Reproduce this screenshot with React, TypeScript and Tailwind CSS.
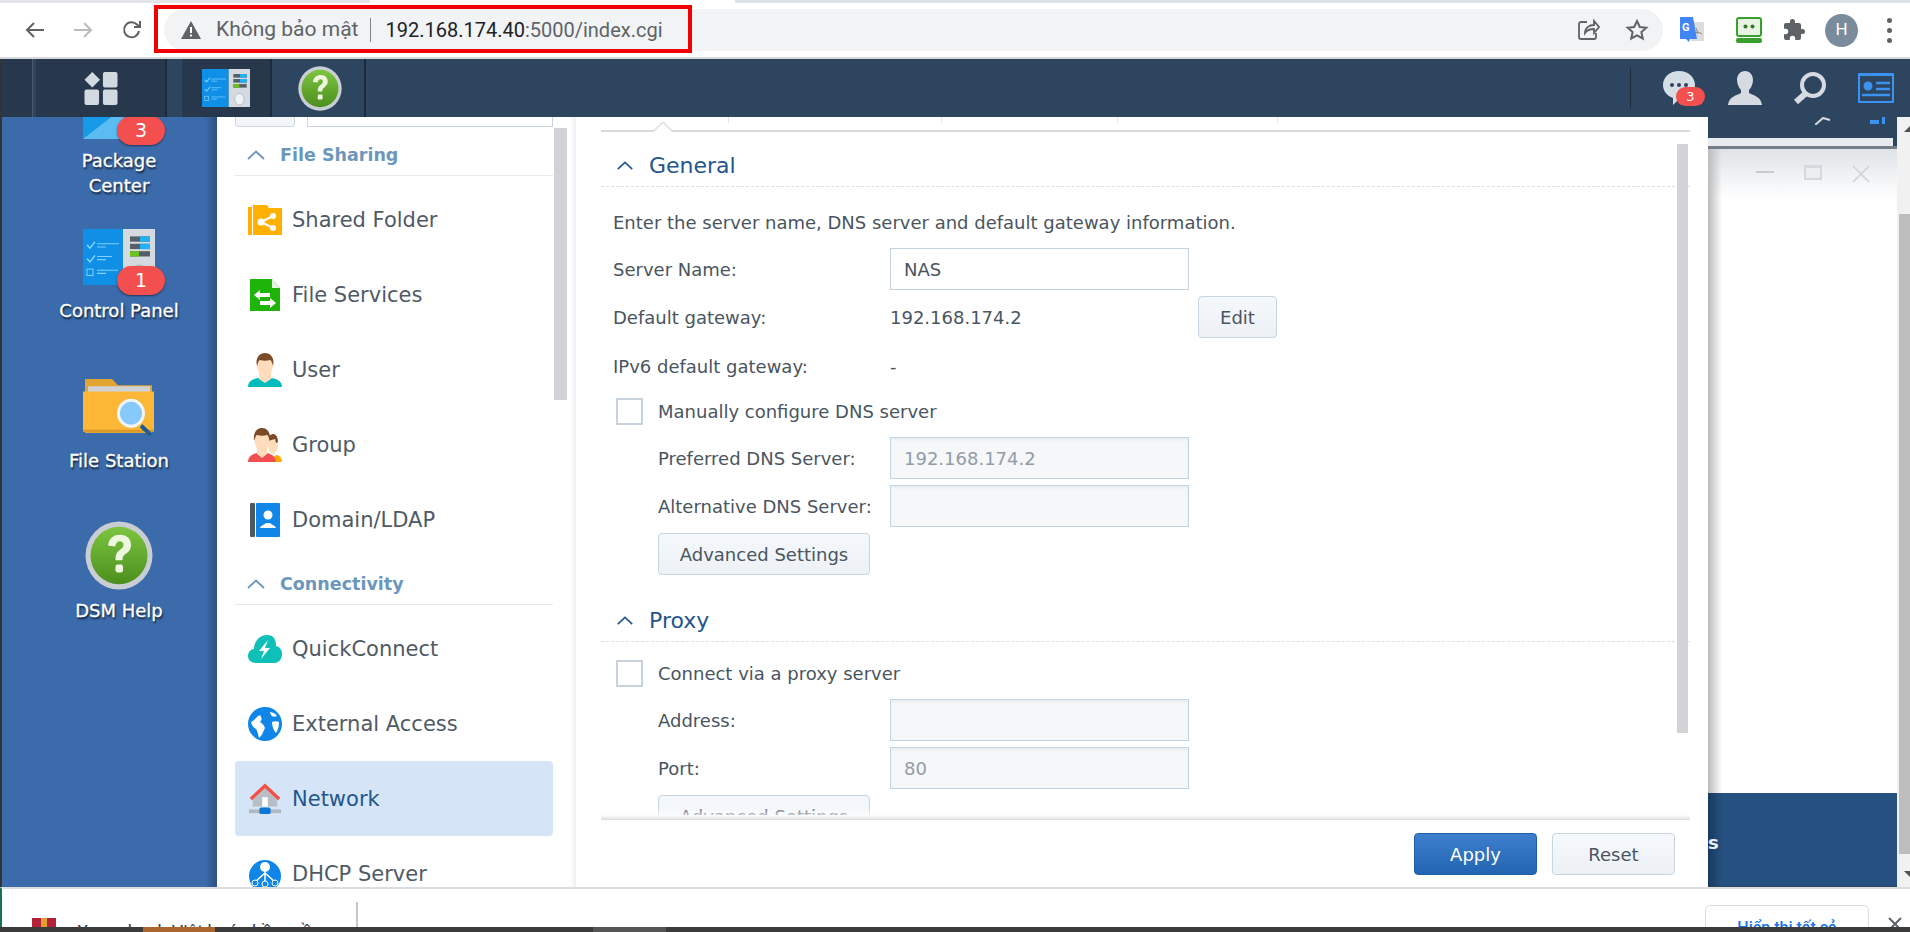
import React from "react";

const ui = "font-['DejaVu_Sans',sans-serif]";

const Chevron = ({ className }: { className: string }) => (
  <svg viewBox="0 0 18 10" className={className} fill="none" stroke="currentColor" strokeWidth="1.8">
    <path d="M1 9 9 1.5 17 9" />
  </svg>
);

const HelpIcon = ({ className }: { className: string }) => (
  <svg viewBox="0 0 68 65" preserveAspectRatio="none" className={className}>
    <defs>
      <linearGradient id="helpGreen" x1="0" y1="0" x2="0" y2="1">
        <stop offset="0" stopColor="#7cc440" />
        <stop offset="1" stopColor="#4c8f1d" />
      </linearGradient>
    </defs>
    <ellipse cx="34" cy="32.5" rx="33.5" ry="32" fill="#c9ced4" />
    <ellipse cx="34" cy="32.5" rx="28.5" ry="27" fill="url(#helpGreen)" />
    <path d="M23 23c1-7 6-10 12-10 7 0 11 4 11 9.500 0 4.500-2.500 6.500-5.500 8.500-2.500 1.700-3 3-3 6h-7c0-5 1-7.500 4.500-10 2.500-1.800 3.500-3 3.500-4.700 0-2-1.500-3.300-3.700-3.300-2.500 0-4 1.500-4.600 5z" fill="#eef7df" />
    <rect x="30.500" y="41" width="7.500" height="7.500" rx="2" fill="#eef7df" />
  </svg>
);

const ControlIcon = ({ className }: { className: string }) => (
  <svg viewBox="0 0 72 53" preserveAspectRatio="none" className={className}>
    <rect width="40" height="53" fill="#0f8fe6" />
    <rect x="40" width="32" height="53" fill="#d4dae0" />
    <path d="M4 15l3 3 5-6M4 28l3 3 5-6" stroke="#7fd0ff" strokeWidth="1.500" fill="none" />
    <rect x="4" y="38" width="6" height="6" fill="none" stroke="#7fd0ff" />
    <path d="M14 14h22M14 17h9M14 26h15M14 29h9M14 39h21M14 42h9" stroke="#7fd0ff" />
    <rect x="47" y="7" width="20" height="5" fill="#555f68" />
    <rect x="57" y="7" width="10" height="5" fill="#1fb2f5" />
    <rect x="47" y="14" width="20" height="5" fill="#555f68" />
    <rect x="57" y="14" width="10" height="5" fill="#1fb2f5" />
    <rect x="47" y="21" width="20" height="5" fill="#555f68" />
    <rect x="47" y="21" width="9" height="5" fill="#6cc31f" />
    <ellipse cx="56" cy="42" rx="7" ry="8" fill="#eef2f5" stroke="#aab4bc" />
  </svg>
);

const FolderSearchIcon = ({ className }: { className: string }) => (
  <svg viewBox="0 0 72 55" preserveAspectRatio="none" className={className}>
    <path d="M2 0h27l6 6h34v46H2z" fill="#e2a432" />
    <rect x="5" y="7" width="62" height="8" fill="#cfd3d6" />
    <path d="M0 12h71v39H0z" fill="#fbb735" />
    <path d="M0 49h71v2H0z" fill="#d9962a" />
    <path d="M58 45l10 9" stroke="#1f5d8f" strokeWidth="4" />
    <circle cx="48" cy="33" r="12.500" fill="#86c9fa" stroke="#f1f5f8" strokeWidth="3" />
  </svg>
);

const PackageIcon = ({ className }: { className: string }) => (
  <svg viewBox="0 0 72 53" preserveAspectRatio="none" className={className}>
    <path d="M0 10h72v43H0z" fill="#1699e6" />
    <path d="M0 53 34 28 72 53z" fill="#5bbcf2" />
    <path d="M16 0h40l-18 30z" fill="#f0c23c" />
  </svg>
);

const DesktopIcon = ({ icon, label, badge, badgeClass = "bottom-[-10px]", gap, className }: { icon: React.ReactNode; label: React.ReactNode; badge?: string; badgeClass?: string; gap: string; className: string }) => (
  <div className={`flex shrink-0 flex-col items-center ${className}`}>
    <div className="relative flex h-fit w-[72px] justify-center">
      {icon}
      {badge && (
        <span className={`absolute right-[-10px] flex h-[29px] w-[48px] items-center justify-center rounded-full bg-[#f44f4f] text-[19px] text-white shadow-[0_1px_2px_rgba(0,0,0,0.5)] ${badgeClass}`}>
          {badge}
        </span>
      )}
    </div>
    <div className={`${gap} whitespace-nowrap text-center text-[18px] leading-[25px] text-white [-webkit-text-stroke:0.3px_white] [text-shadow:1px_2px_2px_rgba(0,0,0,0.75)]`}>{label}</div>
  </div>
);

const SharedFolder = () => (
  <svg viewBox="0 0 34 30" className="h-[30px] w-[34px]">
    <path d="M0 2h4v28H0zM5 0h14l2 3h13v27H5z" fill="#ffb000" />
    <circle cx="13" cy="17" r="3.500" fill="#fff" />
    <circle cx="25" cy="11" r="3" fill="#fff" />
    <circle cx="25" cy="23" r="3" fill="#fff" />
    <path d="M13 17 25 11M13 17l12 6" stroke="#fff" strokeWidth="2" />
  </svg>
);

const FileServices = () => (
  <svg viewBox="0 0 34 34" className="h-[34px] w-[34px]">
    <path d="M2 1h22l8 9v23H2z" fill="#1eb40a" />
    <path d="M24 1v9h8z" fill="#e5f6e0" />
    <path d="M6 17l6-5v3h10v4H12v3zM28 25l-6 5v-3H12v-4h10v-3z" fill="#fff" />
  </svg>
);

const UserIcon = () => (
  <svg viewBox="0 0 34 34" className="h-[34px] w-[34px]">
    <path d="M0 34c0-6 5-8 10-9l7 3 7-3c5 1 10 3 10 9z" fill="#05bcbc" />
    <path d="M11 19h12v7l-6 4-6-4z" fill="#ffdcbc" />
    <ellipse cx="17" cy="12" rx="8" ry="11" fill="#ffdcbc" />
    <path d="M9 13C7 4 12 0 17 0s10 4 8 13c-1-4-2-6-3-6-3 1-7 1-10 0-1 0-2 2-3 6z" fill="#7b4a26" />
  </svg>
);

const GroupIcon = () => (
  <svg viewBox="0 0 34 34" className="h-[34px] w-[34px]">
    <path d="M24 34c0-4 3-7 5-7s5 3 5 7z" fill="#ffa800" />
    <ellipse cx="25" cy="17" rx="5" ry="9" fill="#ffdcbc" />
    <path d="M20 13c0-5 3-7 5-7s5 2 5 8l-2 1-1-4z" fill="#7b4a26" />
    <path d="M0 34c0-5 4-8 9-9l5 2 5-2c5 1 9 4 9 9z" fill="#f25050" />
    <path d="M9 19h10v7l-5 4-5-4z" fill="#ffdcbc" />
    <ellipse cx="14" cy="12" rx="7.500" ry="11" fill="#ffdcbc" />
    <path d="M6 13C5 4 9 0 14 0s9 4 8 13c-1-3-2-6-3-6-3 1-7 1-10 0-1 0-2 3-3 6z" fill="#7b4a26" />
  </svg>
);

const DomainIcon = () => (
  <svg viewBox="0 0 34 34" className="h-[34px] w-[34px]">
    <rect x="2" width="5" height="34" rx="1" fill="#4b5866" />
    <rect x="8" width="24" height="34" rx="1" fill="#0f86e8" />
    <circle cx="20" cy="12" r="4.500" fill="#fff" />
    <path d="M12 25c1-3 4-3 6-5h4c2 2 5 2 6 5z" fill="#fff" />
  </svg>
);

const QuickConnectIcon = () => (
  <svg viewBox="0 0 34 28" className="h-[28px] w-[34px]">
    <path d="M8 28C3 28 0 25 0 21s3-7 6-7c0-7 5-14 13-14s9 6 9 11c4 1 6 4 6 8 0 5-3 9-8 9z" fill="#0fc0b8" />
    <path d="M20 5l-9 11h5l-3 8 9-11h-5z" fill="#fff" />
  </svg>
);

const GlobeIcon = () => (
  <svg viewBox="0 0 34 34" className="h-[34px] w-[34px]">
    <circle cx="17" cy="17" r="17" fill="#0f86e8" />
    <path d="M3 15c3-1 5-5 9-7 2 3 2 5 0 7 2 1 4 3 5 6-2 3-2 7-6 10-1-3-1-6-3-9-2-1-4-3-5-7zM22 5c2 0 5 1 7 4-2 1-5 1-6-1zM24 15c3-1 5-1 7 0 0 5-1 8-3 11-2-2-4-7-4-11z" fill="#fff" />
  </svg>
);

const NetworkIcon = () => (
  <svg viewBox="0 0 36 34" className="h-[34px] w-[36px]">
    <path d="M18 3 31 15v10H5V15z" fill="#b8bec6" />
    <path d="M3 17 18 3l15 14" stroke="#f44f42" strokeWidth="3.500" fill="none" />
    <rect x="15" y="15" width="6" height="10" fill="#fff" />
    <rect x="1" y="28" width="34" height="4" fill="#b0b8c0" />
    <rect x="12" y="26" width="12" height="7" rx="2" fill="#0f77d8" />
  </svg>
);

const DhcpIcon = () => (
  <svg viewBox="0 0 34 30" className="h-[30px] w-[34px]">
    <circle cx="17" cy="17" r="16" fill="#0f86e8" />
    <circle cx="17" cy="8" r="5" fill="#fff" />
    <path d="M17 12v10M17 14 7 23M17 14l10 9" stroke="#fff" strokeWidth="1.500" />
    <circle cx="7" cy="24" r="3" fill="#0f86e8" stroke="#fff" />
    <circle cx="17" cy="25" r="3" fill="#0f86e8" stroke="#fff" />
    <circle cx="27" cy="24" r="3" fill="#0f86e8" stroke="#fff" />
  </svg>
);

const SectionTitle = ({ title, className }: { title: string; className: string }) => (
  <div className={`flex items-center border-b border-[#e6eaee] pl-[12px] text-[#6c97bd] ${className}`}>
    <Chevron className="h-[10px] w-[18px]" />
    <span className="ml-[15px] text-[17.5px] font-bold">{title}</span>
  </div>
);

const NavItem = ({ icon, label, active }: { icon: React.ReactNode; label: string; active?: boolean }) => (
  <div className={`flex h-[75px] w-[318px] shrink-0 items-center rounded-[4px] pl-[13px] text-[21px] ${active ? "bg-[#d5e5f7] text-[#23568c]" : "text-[#505a65]"}`}>
    <span className="flex w-[34px] justify-center">{icon}</span>
    <span className="ml-[10px] pt-[2px]">{label}</span>
  </div>
);

const Sidebar = () => (
  <div className="relative flex h-full w-[353px] shrink-0 flex-col overflow-hidden bg-white pl-[18px]">
    <div className="flex h-[10px] shrink-0">
      <div className="h-full w-[60px] rounded-b-[4px] border border-t-0 border-[#cfd8e2] bg-[#f2f6fa]" />
      <div className="ml-[12px] h-full w-[246px] border border-t-0 border-[#c9d5e1]" />
    </div>
    <SectionTitle title="File Sharing" className="h-[49px] w-[318px] shrink-0 pt-[8px]" />
    <div className="h-[6px] shrink-0" />
    <NavItem icon={<SharedFolder />} label="Shared Folder" />
    <NavItem icon={<FileServices />} label="File Services" />
    <NavItem icon={<UserIcon />} label="User" />
    <NavItem icon={<GroupIcon />} label="Group" />
    <NavItem icon={<DomainIcon />} label="Domain/LDAP" />
    <SectionTitle title="Connectivity" className="mt-[1px] h-[47px] w-[318px] shrink-0 pt-[6px]" />
    <div className="h-[6px] shrink-0" />
    <NavItem icon={<QuickConnectIcon />} label="QuickConnect" />
    <NavItem icon={<GlobeIcon />} label="External Access" />
    <NavItem icon={<NetworkIcon />} label="Network" active />
    <NavItem icon={<DhcpIcon />} label="DHCP Server" />
    <div className="absolute left-[337px] top-[11px] h-[272px] w-[13px] bg-[#d1d3d6]" />
  </div>
);

const FormLabel = ({ children, className = "w-[277px]" }: { children: React.ReactNode; className?: string }) => (
  <div className={`shrink-0 whitespace-nowrap ${className}`}>{children}</div>
);

const Field = ({ value, disabled }: { value?: string; disabled?: boolean }) => (
  <div className={`flex h-[42px] w-[299px] items-center border border-[#c5d2e0] px-[13px] ${disabled ? "bg-[#f5f7f9] text-[#929ca6] shadow-[inset_0_2px_2px_rgba(200,210,220,0.25)]" : "bg-white text-[#4a5560]"}`}>
    {value}
  </div>
);

const SoftButton = ({ label, className }: { label: string; className: string }) => (
  <div className={`flex h-[42px] items-center justify-center rounded-[4px] border border-[#c8d4e0] bg-gradient-to-b from-[#f5f9fd] to-[#edf1f5] text-[#4a5560] ${className}`}>
    {label}
  </div>
);

const SubRow = ({ label, children }: { label: string; children: React.ReactNode }) => (
  <div className="mb-[6px] flex h-[42px] items-center pl-[57px]">
    <FormLabel className="w-[232px]">{label}</FormLabel>
    {children}
  </div>
);

const Heading = ({ title, className }: { title: string; className: string }) => (
  <div className={`flex items-center border-b border-dashed border-[#d9e0e8] pl-[15px] text-[#23568c] ${className}`}>
    <Chevron className="h-[9px] w-[18px]" />
    <span className="ml-[15px] text-[22px]">{title}</span>
  </div>
);

const CheckRow = ({ label, className }: { label: string; className: string }) => (
  <div className={`flex items-center pl-[15px] ${className}`}>
    <div className="h-[27px] w-[27px] border-2 border-[#c8d2dc] bg-white" />
    <span className="ml-[15px]">{label}</span>
  </div>
);

const ContentPane = () => (
  <div className="relative flex h-full w-[1132px] shrink-0 flex-col pl-[25px] text-[18px] text-[#4a5560]">
    <div className="relative h-[15px] w-[1089px] shrink-0 border-b-2 border-[#d8dadc]">
      <div className="absolute left-[127px] top-0 h-[6px] w-px bg-[#e4e8ec]" />
      <div className="absolute left-[340px] top-0 h-[6px] w-px bg-[#e4e8ec]" />
      <div className="absolute left-[516px] top-0 h-[6px] w-px bg-[#e4e8ec]" />
      <div className="absolute left-[676px] top-0 h-[6px] w-px bg-[#e4e8ec]" />
      <svg viewBox="0 0 20 10" className="absolute left-[52px] top-[5px] h-[10px] w-[20px]">
        <path d="M0 10 10 0l10 10" fill="#fff" stroke="#dcdedf" strokeWidth="1.500" />
      </svg>
    </div>
    <div className="relative h-[688px] w-[1089px] shrink-0 overflow-hidden">
      <Heading title="General" className="mt-[11px] h-[44px] pt-[1px]" />
      <div className="mt-[24px] flex h-[22px] items-center whitespace-nowrap pl-[12px]">Enter the server name, DNS server and default gateway information.</div>
      <div className="mt-[15px] flex h-[42px] items-center pl-[12px]">
        <FormLabel>Server Name:</FormLabel>
        <Field value="NAS" />
      </div>
      <div className="mt-[6px] flex h-[42px] items-center pl-[12px]">
        <FormLabel>Default gateway:</FormLabel>
        <div className="w-[308px]">192.168.174.2</div>
        <SoftButton label="Edit" className="w-[79px]" />
      </div>
      <div className="mt-[7px] flex h-[42px] items-center pl-[12px]">
        <FormLabel>IPv6 default gateway:</FormLabel>
        <div>-</div>
      </div>
      <CheckRow label="Manually configure DNS server" className="mt-[11px] h-[27px]" />
      <div className="mt-[12px]">
        <SubRow label="Preferred DNS Server:"><Field value="192.168.174.2" disabled /></SubRow>
        <SubRow label="Alternative DNS Server:"><Field disabled /></SubRow>
        <div className="pl-[57px]">
          <SoftButton label="Advanced Settings" className="w-[212px]" />
        </div>
      </div>
      <Heading title="Proxy" className="mt-[25px] h-[42px]" />
      <CheckRow label="Connect via a proxy server" className="mt-[18px] h-[27px]" />
      <div className="mt-[12px]">
        <SubRow label="Address:"><Field disabled /></SubRow>
        <SubRow label="Port:"><Field value="80" disabled /></SubRow>
        <div className="pl-[57px]">
          <SoftButton label="Advanced Settings" className="w-[212px]" />
        </div>
      </div>
      <div className="absolute bottom-0 left-0 h-[14px] w-full bg-gradient-to-b from-white/0 to-white" />
      <div className="absolute bottom-0 left-0 h-[5px] w-full bg-gradient-to-b from-white to-[#dcdcdc]" />
      <div className="absolute left-[1076px] top-[12px] h-[589px] w-[11px] bg-[#d1d3d6]" />
    </div>
    <div className="flex h-[67px] w-[1074px] shrink-0 items-start justify-end pt-[13px]">
      <div className="flex h-[42px] w-[123px] items-center justify-center rounded-[4px] border border-[#1f5fa8] bg-gradient-to-b from-[#3d7fcd] to-[#2365b2] text-white">Apply</div>
      <SoftButton label="Reset" className="ml-[15px] w-[123px]" />
    </div>
  </div>
);

const BehindWindow = () => (
  <div className="flex h-full w-[189px] shrink-0 flex-col bg-[#2e4560]">
    <div className="relative h-[21px] shrink-0 overflow-hidden">
      <svg viewBox="0 0 16 8" className="absolute left-[107px] top-0 h-[8px] w-[16px]"><path d="M0 8 8 1l7 2" stroke="#d8dde2" strokeWidth="2" fill="none" /></svg>
      <div className="absolute left-[162px] top-[3px] h-[4px] w-[9px] bg-[#3b92f0]" />
      <div className="absolute left-[174px] top-0 h-[7px] w-[3px] bg-[#3b92f0]" />
    </div>
    <div className="h-[8px] w-[185px] shrink-0 bg-[#e8ebf0]" />
    <div className="h-[3px] shrink-0 bg-[#757d86]" />
    <div className="relative flex h-[644px] shrink-0 flex-col overflow-hidden bg-white">
      <div className="flex h-[50px] items-start bg-gradient-to-b from-[#dfe3e7] to-white pl-[48px] pt-[16px]">
        <div className="mt-[6px] h-[2px] w-[18px] bg-[#c8cacc]" />
        <div className="ml-[30px] flex h-[15px] w-[18px] flex-col bg-[#d5d8dc] p-[3px_2px_2px]"><div className="h-full w-full bg-[#eceef0]" /></div>
        <svg viewBox="0 0 18 18" className="ml-[30px] h-[18px] w-[18px]"><path d="M1 1l16 16M17 1 1 17" stroke="#cfd2d5" strokeWidth="1.500" /></svg>
      </div>
      <div className="absolute inset-y-0 left-0 w-[14px] bg-gradient-to-r from-[#bcbcbc] to-white/0" />
    </div>
    <div className="relative h-[93px] shrink-0 overflow-hidden bg-[#26507f]">
      <div className="absolute inset-y-0 left-0 w-[14px] bg-gradient-to-r from-[#173a5f] to-white/0" />
      <span className="absolute left-0 top-[36px] text-[18px] font-bold text-[#e8eef4]">s</span>
    </div>
  </div>
);

const PageScrollbar = () => (
  <div className="flex h-full w-[13px] shrink-0 flex-col bg-[#f1f1f1]">
    <div className="flex h-[97px] shrink-0 items-start justify-end pt-[9px]">
      <div className="h-0 w-0 border-b-[6px] border-l-[6px] border-b-[#505050] border-l-transparent" />
    </div>
    <div className="ml-[2px] h-[640px] shrink-0 bg-[#bdbdbd]" />
    <div className="flex flex-1 items-start justify-end pt-[17px]">
      <div className="h-0 w-0 border-t-[6px] border-l-[6px] border-t-[#505050] border-l-transparent" />
    </div>
  </div>
);

const BrowserBar = () => (
  <div className="flex h-[59px] shrink-0 flex-col bg-white font-['Roboto',sans-serif]">
    <div className="flex h-[3px] shrink-0 bg-[#dee1e6]">
      <div className="h-full w-[370px] rounded-br-[4px] bg-[#e3e5e8]" />
      <div className="h-full w-[365px] bg-white" />
    </div>
    <div className="flex h-[54px] items-center pl-[2px]">
      <svg viewBox="0 0 24 24" className="ml-[21px] h-[24px] w-[24px]" fill="none" stroke="#5f6368" strokeWidth="2"><path d="M21 12H4M11 5l-7 7 7 7" /></svg>
      <svg viewBox="0 0 24 24" className="ml-[24px] h-[24px] w-[24px]" fill="none" stroke="#babcbe" strokeWidth="2"><path d="M3 12h17M13 5l7 7-7 7" /></svg>
      <svg viewBox="0 0 24 24" className="ml-[25px] h-[24px] w-[24px]" fill="none" stroke="#5f6368" strokeWidth="2"><path d="M19 13a7.500 7.500 0 1 1-2-6.500L20 9M20 3v6h-6" /></svg>
      <div className="relative ml-[20px] flex h-[42px] w-[1499px] items-center rounded-full bg-[#f1f3f4] pl-[17px]">
        <svg viewBox="0 0 20 18" className="h-[18px] w-[20px]"><path d="M10 0 20 18H0z" fill="#5f6368" /><path d="M9 6h2v6H9zM9 13.500h2v2H9z" fill="#fff" /></svg>
        <span className="ml-[15px] text-[21px] text-[#5f6368]">Không bảo mật</span>
        <div className="ml-[12px] h-[24px] w-px bg-[#80868b]" />
        <span className="ml-[14px] text-[20px] text-[#202124]">192.168.174.40<span className="text-[#5f6368]">:5000/index.cgi</span></span>
        <svg viewBox="0 0 24 24" className="absolute left-[1412px] top-[9px] h-[24px] w-[24px]" fill="none" stroke="#5f6368" strokeWidth="1.800"><path d="M11 4H5a2 2 0 0 0-2 2v13a2 2 0 0 0 2 2h13a2 2 0 0 0 2-2v-4" /><path d="M9 15c0-5 4-8 9-8V3l5 6-5 6v-4c-4 0-7 1-9 4z" /></svg>
        <svg viewBox="0 0 24 24" className="absolute left-[1461px] top-[9px] h-[24px] w-[24px]" fill="none" stroke="#5f6368" strokeWidth="2"><path d="M12 3l2.800 6 6.500.700-4.900 4.400 1.400 6.400L12 17.300l-5.800 3.200 1.400-6.400-4.900-4.400L9.200 9z" /></svg>
      </div>
      <svg viewBox="0 0 26 26" className="ml-[16px] h-[26px] w-[26px]">
        <rect x="12" y="5" width="13" height="19" fill="#dcdcdc" />
        <path d="M17 11l2 6M14 17l5-2 4 2" stroke="#888" fill="none" />
        <path d="M1 0h13l4 22H11l-1 3-3-3H1z" fill="#4285f4" />
        <text x="3" y="14" fontSize="11" fontWeight="700" fill="#fff" fontFamily="Roboto">G</text>
      </svg>
      <svg viewBox="0 0 26 26" className="ml-[31px] h-[26px] w-[26px]">
        <rect x="1" y="1" width="24" height="18" rx="2" fill="#e9f3e4" stroke="#38a02c" strokeWidth="2" />
        <circle cx="9.500" cy="9.500" r="2" fill="#35752b" />
        <circle cx="16.500" cy="9.500" r="2" fill="#35752b" />
        <rect y="21" width="26" height="5" rx="2" fill="#38a02c" />
      </svg>
      <svg viewBox="0 0 24 24" className="ml-[20px] h-[24px] w-[24px]" fill="#5f6368"><path d="M20.500 11H19V7a2 2 0 0 0-2-2h-4V3.500a2.500 2.500 0 0 0-5 0V5H4a2 2 0 0 0-2 2v3.800h1.500a2.700 2.700 0 0 1 0 5.400H2V20a2 2 0 0 0 2 2h3.800v-1.500a2.700 2.700 0 0 1 5.400 0V22H17a2 2 0 0 0 2-2v-4h1.500a2.500 2.500 0 0 0 0-5z" /></svg>
      <div className="ml-[19px] flex h-[33px] w-[33px] items-center justify-center rounded-full bg-[#7a8b9c] text-[17px] text-white">H</div>
      <div className="ml-[29px] flex flex-col gap-[5px]">
        <div className="h-[5px] w-[5px] rounded-full bg-[#5f6368]" />
        <div className="h-[5px] w-[5px] rounded-full bg-[#5f6368]" />
        <div className="h-[5px] w-[5px] rounded-full bg-[#5f6368]" />
      </div>
    </div>
    <div className="h-[2px] shrink-0 bg-[#d6d8da]" />
    <div className="pointer-events-none absolute left-[154px] top-[5px] h-[48px] w-[538px] border-4 border-[#f00000]" />
  </div>
);

const Taskbar = () => (
  <div className={`flex h-[58px] shrink-0 items-stretch border-l-2 border-[#333] bg-[#2e4560] ${ui}`}>
    <div className="w-[31px] border-r border-[#4a5a6c] bg-[#27384c]" />
    <div className="ml-[3px] flex w-[131px] items-center justify-center border-r-2 border-[#1c2a3a] bg-[#27384c]">
      <svg viewBox="0 0 34 34" className="h-[33px] w-[34px]" fill="#d3d9e0">
        <path d="M8 0l8 8-8 8-8-8z" />
        <rect x="19" y="0" width="15" height="16" rx="2" />
        <rect x="0" y="18" width="15" height="16" rx="2" />
        <rect x="19" y="18" width="15" height="16" rx="2" />
      </svg>
    </div>
    <div className="ml-[15px] flex w-[90px] items-center justify-center border-r-2 border-[#1c2a3a] bg-[#27384c]">
      <ControlIcon className="h-[38px] w-[48px]" />
    </div>
    <div className="ml-[4px] flex w-[90px] items-center justify-center border-r-2 border-[#1c2a3a]">
      <HelpIcon className="h-[45px] w-[44px]" />
    </div>
    <div className="ml-[1264px] flex items-center">
      <div className="h-[40px] w-px bg-[#1c2a3a]" />
      <div className="relative ml-[31px] flex w-[34px]">
        <svg viewBox="0 0 34 34" className="h-[34px] w-[34px]">
          <path d="M17 0c9 0 16 6 16 14s-7 14-16 14l-6 6v-7C5 25 1 20 1 14 1 6 8 0 17 0z" fill="#d5dde5" />
          <circle cx="10" cy="14" r="2" fill="#2e4560" /><circle cx="17" cy="14" r="2" fill="#2e4560" /><circle cx="24" cy="14" r="2" fill="#2e4560" />
        </svg>
        <span className="absolute left-[14px] top-[16px] flex h-[19px] w-[29px] items-center justify-center rounded-full bg-[#f44f4f] text-[13px] text-white">3</span>
      </div>
      <svg viewBox="0 0 34 34" className="ml-[32px] h-[34px] w-[34px]" fill="#d5dbe1"><path d="M17 0c5 0 8 4 8 9 0 4-2 8-4 10v3c3 2 12 3 13 12H0c1-9 10-10 13-12v-3c-2-2-4-6-4-10 0-5 3-9 8-9z" /></svg>
      <svg viewBox="0 0 34 34" className="ml-[31px] h-[34px] w-[34px]" fill="none" stroke="#d5dbe1"><circle cx="20" cy="14" r="11" strokeWidth="4" /><path d="M12 23 3 31" strokeWidth="6" /></svg>
      <svg viewBox="0 0 36 30" className="ml-[31px] h-[30px] w-[36px]">
        <rect width="36" height="30" rx="1" fill="#3b92f0" />
        <rect x="2" y="3" width="32" height="25" fill="#2e4560" />
        <circle cx="10" cy="13" r="4.500" fill="#3b92f0" />
        <path d="M18 10h14M18 16h14M4 22h28" stroke="#3b92f0" strokeWidth="2.500" />
      </svg>
    </div>
  </div>
);

const BottomBar = () => (
  <div className="flex h-[45px] shrink-0 flex-col overflow-hidden bg-white font-['Roboto',sans-serif]">
    <div className="flex h-[40px] items-start border-t-2 border-l-2 border-t-[#dcdddf] border-l-[#16705a]">
      <svg viewBox="0 0 24 12" className="ml-[30px] mt-[29px] h-[12px] w-[24px] shrink-0">
        <rect width="24" height="9" fill="#b3203a" />
        <rect y="9" width="24" height="3" fill="#39459a" />
        <rect x="9" width="6" height="10" fill="#e0a030" />
      </svg>
      <span className="ml-[21px] mt-[29px] whitespace-nowrap text-[18px] text-[#3c4043]">Xem nhanh Việt hoá phần mềm</span>
      <div className="absolute left-[356px] top-[902px] h-[25px] w-[2px] bg-[#c8c8c8]" />
      <div className="absolute left-[1705px] top-[905px] flex h-[40px] w-[164px] justify-center rounded-[5px] border border-[#dadce0] pt-[10px] text-[16px] font-medium text-[#1a73e8]">Hiển thị tất cả</div>
      <svg viewBox="0 0 14 14" className="absolute left-[1888px] top-[917px] h-[14px] w-[14px]"><path d="M1 1l12 12M13 1 1 13" stroke="#5f6368" strokeWidth="2" /></svg>
    </div>
    <div className="relative z-10 mt-auto flex h-[5px] shrink-0 bg-[#3b3b3b]">
      <div className="ml-[143px] h-full w-[72px] bg-[#ab652e]" />
      <div className="ml-[378px] h-full w-[73px] bg-[#555555]" />
    </div>
  </div>
);

export default function App() {
  return (
    <div className={`relative flex h-[932px] w-[1910px] flex-col overflow-hidden bg-white ${ui}`}>
      <BrowserBar />
      <Taskbar />
      <div className="flex h-[770px] shrink-0">
        <div className="relative flex h-full w-[217px] shrink-0 flex-col items-center overflow-hidden border-l-2 border-[#333] bg-[#3b6bab] pl-[19px]">
          <DesktopIcon icon={<PackageIcon className="h-[56px] w-[72px]" />} badge="3" badgeClass="bottom-[-6px]" gap="mt-[9px]" label={<>Package<br />Center</>} className="mt-[-34px] h-[146px]" />
          <DesktopIcon icon={<ControlIcon className="h-[56px] w-[72px]" />} badge="1" gap="mt-[13px]" label="Control Panel" className="h-[150px]" />
          <DesktopIcon icon={<FolderSearchIcon className="h-[57px] w-[72px]" />} gap="mt-[12px]" label="File Station" className="h-[142px]" />
          <DesktopIcon icon={<HelpIcon className="h-[69px] w-[68px]" />} gap="mt-[8px]" label="DSM Help" className="h-[110px]" />
          <div className="absolute inset-y-0 right-0 w-[12px] bg-gradient-to-r from-[#3b6bab]/0 to-[#2d5283]" />
        </div>
        <div className="flex h-full w-[1491px] shrink-0 bg-white">
          <Sidebar />
          <div className="h-full w-[6px] shrink-0 bg-gradient-to-r from-white to-[#eef0f2]" />
          <ContentPane />
        </div>
        <BehindWindow />
        <PageScrollbar />
      </div>
      <BottomBar />
    </div>
  );
}
